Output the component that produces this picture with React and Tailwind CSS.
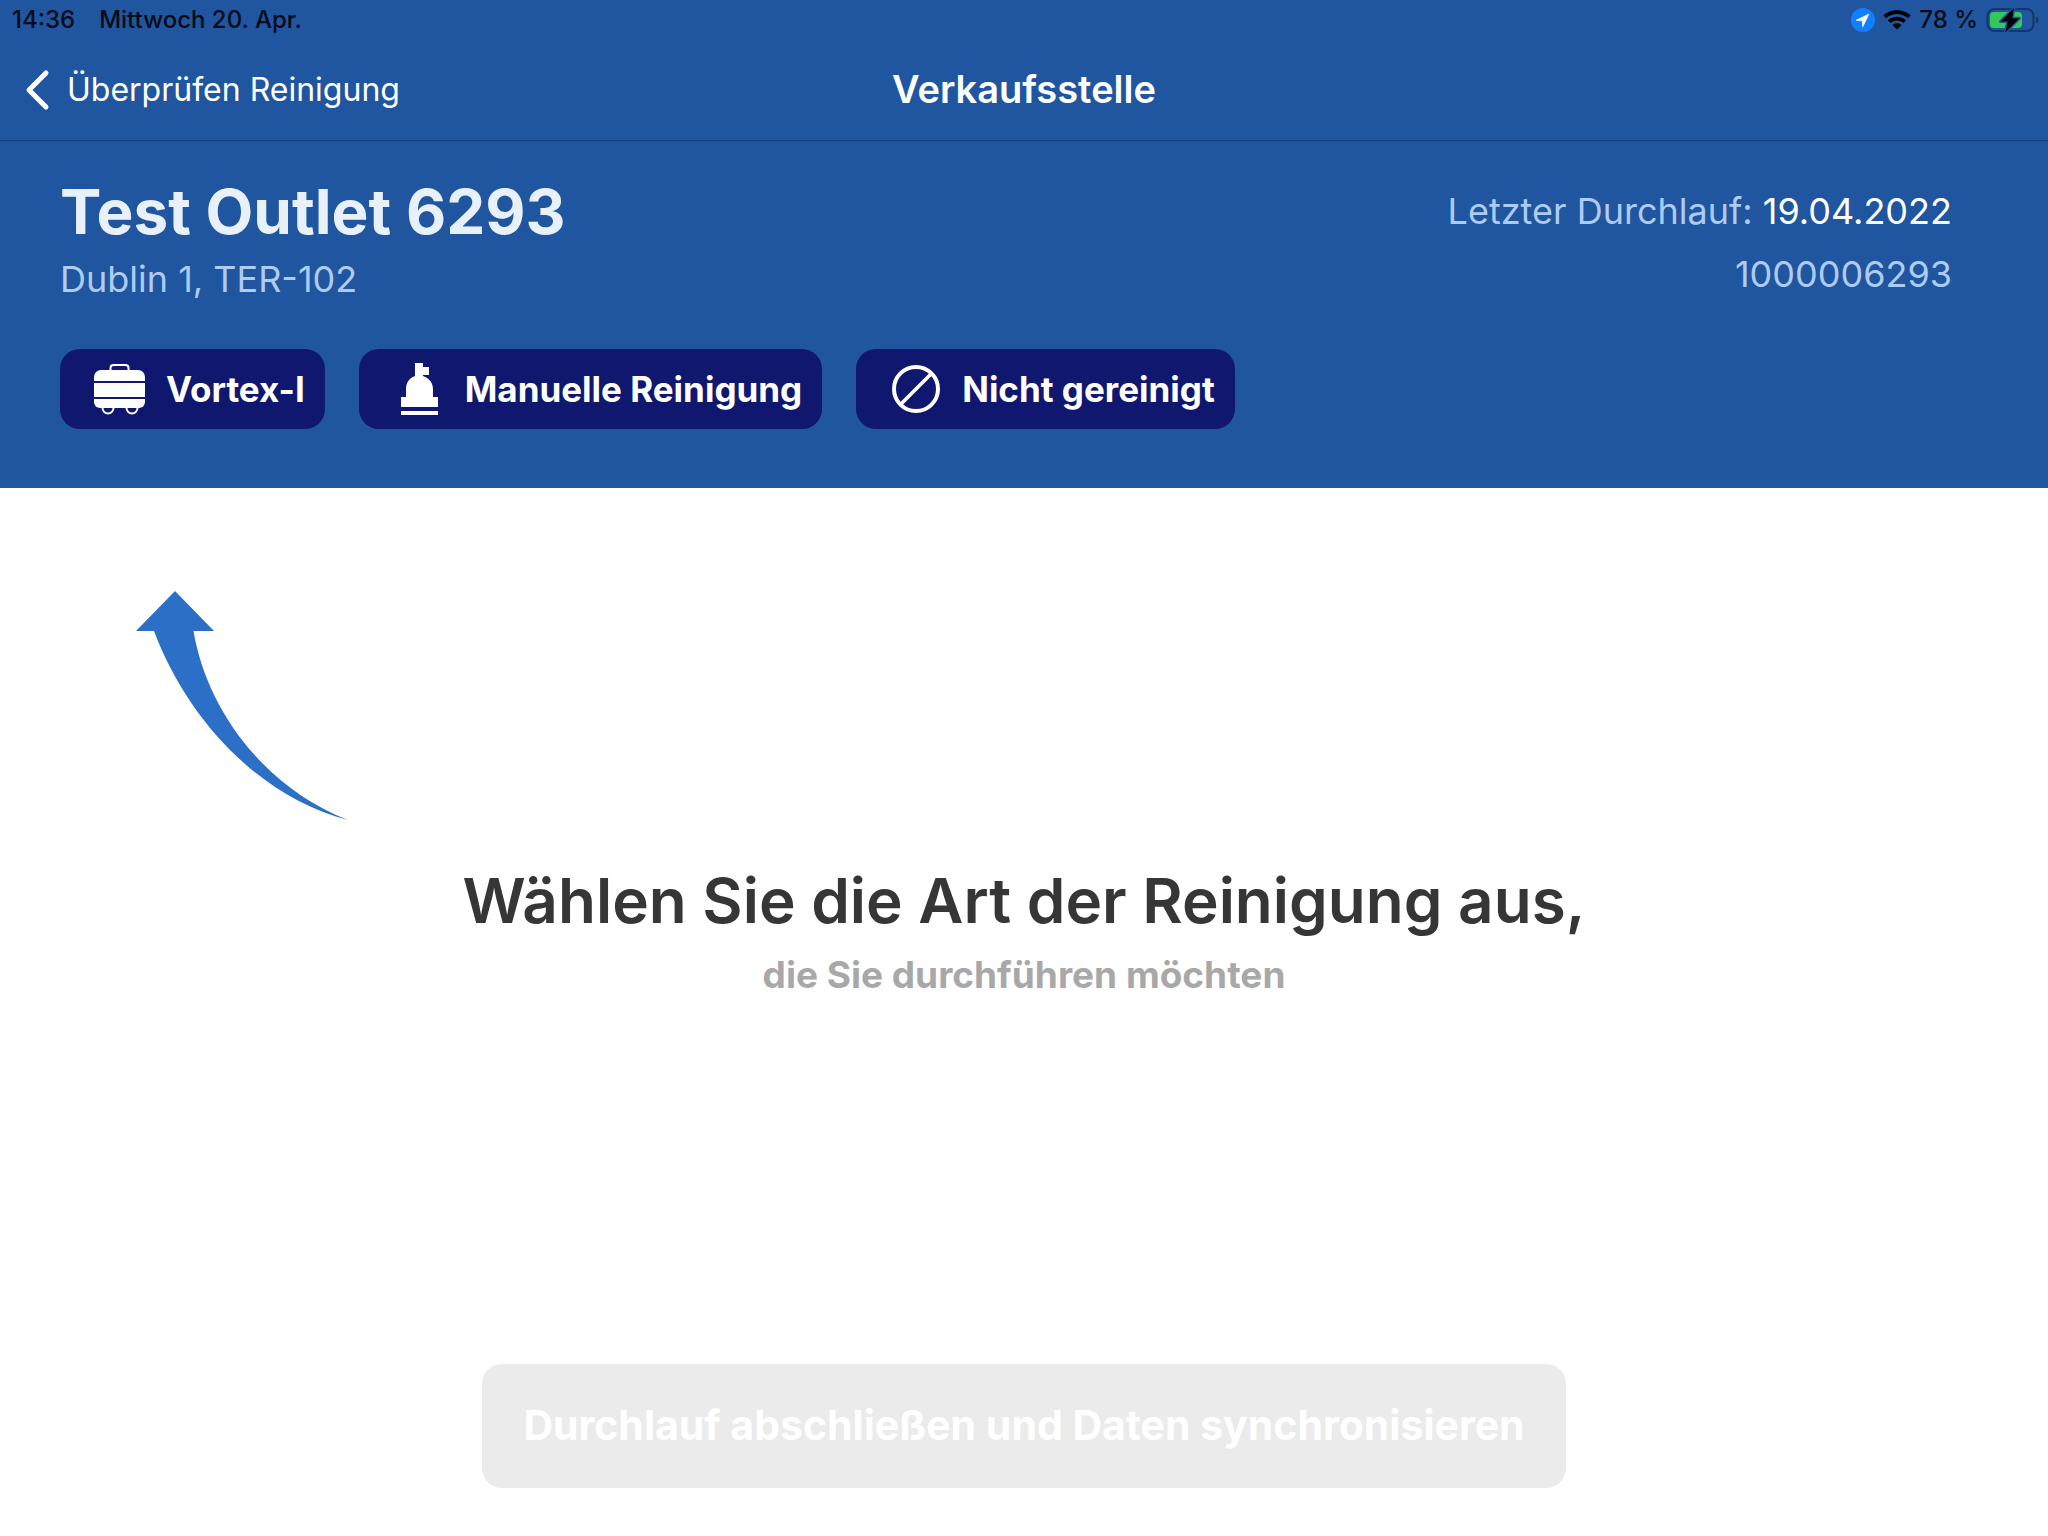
function StatusBar() {
  return (
    <div className="flex h-10 items-center justify-between pr-2 pl-3 text-2xl font-medium text-[#050a18]">
      <div className="flex items-center gap-6">
        <span>14:36</span>
        <span>Mittwoch 20. Apr.</span>
      </div>
      <div className="flex items-center gap-2">
        <svg className="h-6 w-6" viewBox="0 0 24 24" aria-hidden="true">
          <circle cx="12" cy="12" r="12" fill="#1180ff" />
          <path d="M18 6 5 12.3l6.2.5.5 6.2z" fill="#fff" stroke="#fff" strokeWidth="0.6" strokeLinejoin="round" />
        </svg>
        <svg className="h-5 w-7" viewBox="0 0 28 20" aria-hidden="true">
          <path d="M14 0C8.700 0 3.900 2.100.300 5.500L3 8.300C5.900 5.600 9.800 3.900 14 3.900s8.100 1.700 11 4.400l2.700-2.800C24.100 2.100 19.300 0 14 0Z" />
          <path d="M14 6.700c-3.500 0-6.700 1.300-9.100 3.500l2.700 2.800c1.700-1.500 3.900-2.500 6.400-2.500s4.700 1 6.400 2.500l2.700-2.800C20.700 8 17.500 6.700 14 6.700Z" />
          <path d="M14 13.300c-1.800 0-3.300.6-4.500 1.700L14 19.600l4.500-4.600c-1.200-1.100-2.700-1.700-4.500-1.700Z" />
        </svg>
        <span>78 %</span>
        <svg className="h-7 w-[54px]" viewBox="0 0 54 28" aria-hidden="true">
          <rect x="1.500" y="3" width="46" height="22" rx="7" fill="none" stroke="#123769" strokeWidth="2" />
          <rect x="4" y="6" width="32" height="16" rx="4" fill="#34c759" />
          <path d="M50 10.500v7c1.500-.5 2.500-2 2.500-3.500s-1-3-2.500-3.500Z" fill="#123769" />
          <path d="M28 2 14.500 15.600h7.300L19.200 26.500 33.500 12.200h-7.400z" fill="#000" stroke="#1e569f" strokeWidth="3" paintOrder="stroke" strokeLinejoin="round" />
        </svg>
      </div>
    </div>
  );
}

function TrolleyIcon() {
  return (
    <svg className="h-[52px] w-[52px]" viewBox="0 0 52 52" aria-hidden="true">
      <path d="M16.500 8V5a3 3 0 0 1 3-3h12a3 3 0 0 1 3 3v3" fill="none" stroke="#fff" strokeWidth="2" />
      <path d="M0 18v-4a7 7 0 0 1 7-7h37a7 7 0 0 1 7 7v4z" fill="#fff" />
      <path d="M0 20h51v14H0z" fill="#fff" />
      <path d="M0 36h51v3a6 6 0 0 1-6 6H6a6 6 0 0 1-6-6z" fill="#fff" />
      <path d="M8.500 45a5.500 5.500 0 0 0 11 0M32.500 45a5.500 5.500 0 0 0 11 0" fill="none" stroke="#fff" strokeWidth="2" />
    </svg>
  );
}

function ManualIcon() {
  return (
    <svg className="h-[52px] w-[52px]" viewBox="0 0 52 52" aria-hidden="true">
      <path
        d="M22 0h8v4h6v8h-6v1c6.200 2 10 7 10 13v8h5v10H8V34h5v-8c0-6 3-11 9-13z M8 48h37v4H8z"
        fill="#fff"
      />
    </svg>
  );
}

function BlockedIcon() {
  return (
    <svg className="h-[52px] w-[52px]" viewBox="0 0 52 52" aria-hidden="true">
      <circle cx="26" cy="26" r="22" fill="none" stroke="#fff" strokeWidth="4" />
      <path d="M41.500 10.500 10.500 41.500" stroke="#fff" strokeWidth="3.500" />
    </svg>
  );
}

const cleaningTypes = [
  { label: "Vortex-I", icon: TrolleyIcon },
  { label: "Manuelle Reinigung", icon: ManualIcon },
  { label: "Nicht gereinigt", icon: BlockedIcon },
];

export default function App() {
  return (
    <div className="flex min-h-screen flex-col bg-white font-['Inter','Liberation_Sans',sans-serif]">
      <header className="bg-[#20569f] text-white">
        <StatusBar />
        <nav className="grid h-[101px] grid-cols-[1fr_auto_1fr] items-center border-b border-[#153f7c] px-6">
          <button type="button" className="flex items-center gap-[15px] justify-self-start text-[32px] leading-10">
            <svg className="h-11 w-7" viewBox="0 0 28 44" fill="none" aria-hidden="true">
              <path d="M22 5 5 22l17 17" stroke="#fff" strokeWidth="5" strokeLinecap="round" strokeLinejoin="round" />
            </svg>
            Überprüfen Reinigung
          </button>
          <h1 className="pb-0.5 text-[38px] leading-10 font-semibold">Verkaufsstelle</h1>
        </nav>

        <div className="px-[60px] pt-[35px] pb-[59px]">
          <div className="flex items-start justify-between pr-9">
            <div>
              <h2 className="text-[62px] leading-[72px] font-bold text-[#e8f0fa]">Test Outlet 6293</h2>
              <p className="mt-[9px] text-4xl leading-[44px] text-[#aecbf2]">Dublin 1, TER-102</p>
            </div>
            <div className="mt-[13px] space-y-[19px] text-right text-4xl leading-[44px] text-[#aecbf2]">
              <p>
                Letzter Durchlauf: <span className="text-white">19.04.2022</span>
              </p>
              <p>1000006293</p>
            </div>
          </div>

          <div className="mt-12 flex gap-[34px]">
            {cleaningTypes.map(({ label, icon: Icon }) => (
              <button
                key={label}
                type="button"
                className="flex h-20 items-center gap-5 rounded-[20px] bg-[#0f186e] pr-5 pl-[34px] text-[35px] font-bold"
              >
                <Icon />
                {label}
              </button>
            ))}
          </div>
        </div>
      </header>

      <main className="flex grow flex-col">
        <svg className="mt-[103px] ml-[136px] h-[230px] w-[213px]" viewBox="0 0 213 230" aria-hidden="true">
          <path
            d="M39 0 78 40H57.500C70 115 125 195 212 229 120 205 50 125 18 40H0z"
            fill="#2c6fc7"
          />
        </svg>
        <div className="mt-11 text-center">
          <h2 className="text-[62px] leading-[72px] font-semibold text-[#363636]">
            Wählen Sie die Art der Reinigung aus,
          </h2>
          <p className="mt-4 text-[37px] leading-[44px] font-bold text-[#a8a8a8]">die Sie durchführen möchten</p>
        </div>
        <button
          type="button"
          disabled
          className="mx-auto mt-auto mb-12 h-[124px] rounded-[20px] bg-[#ebebeb] px-[41px] text-[41px] font-bold text-white"
        >
          Durchlauf abschließen und Daten synchronisieren
        </button>
      </main>
    </div>
  );
}
